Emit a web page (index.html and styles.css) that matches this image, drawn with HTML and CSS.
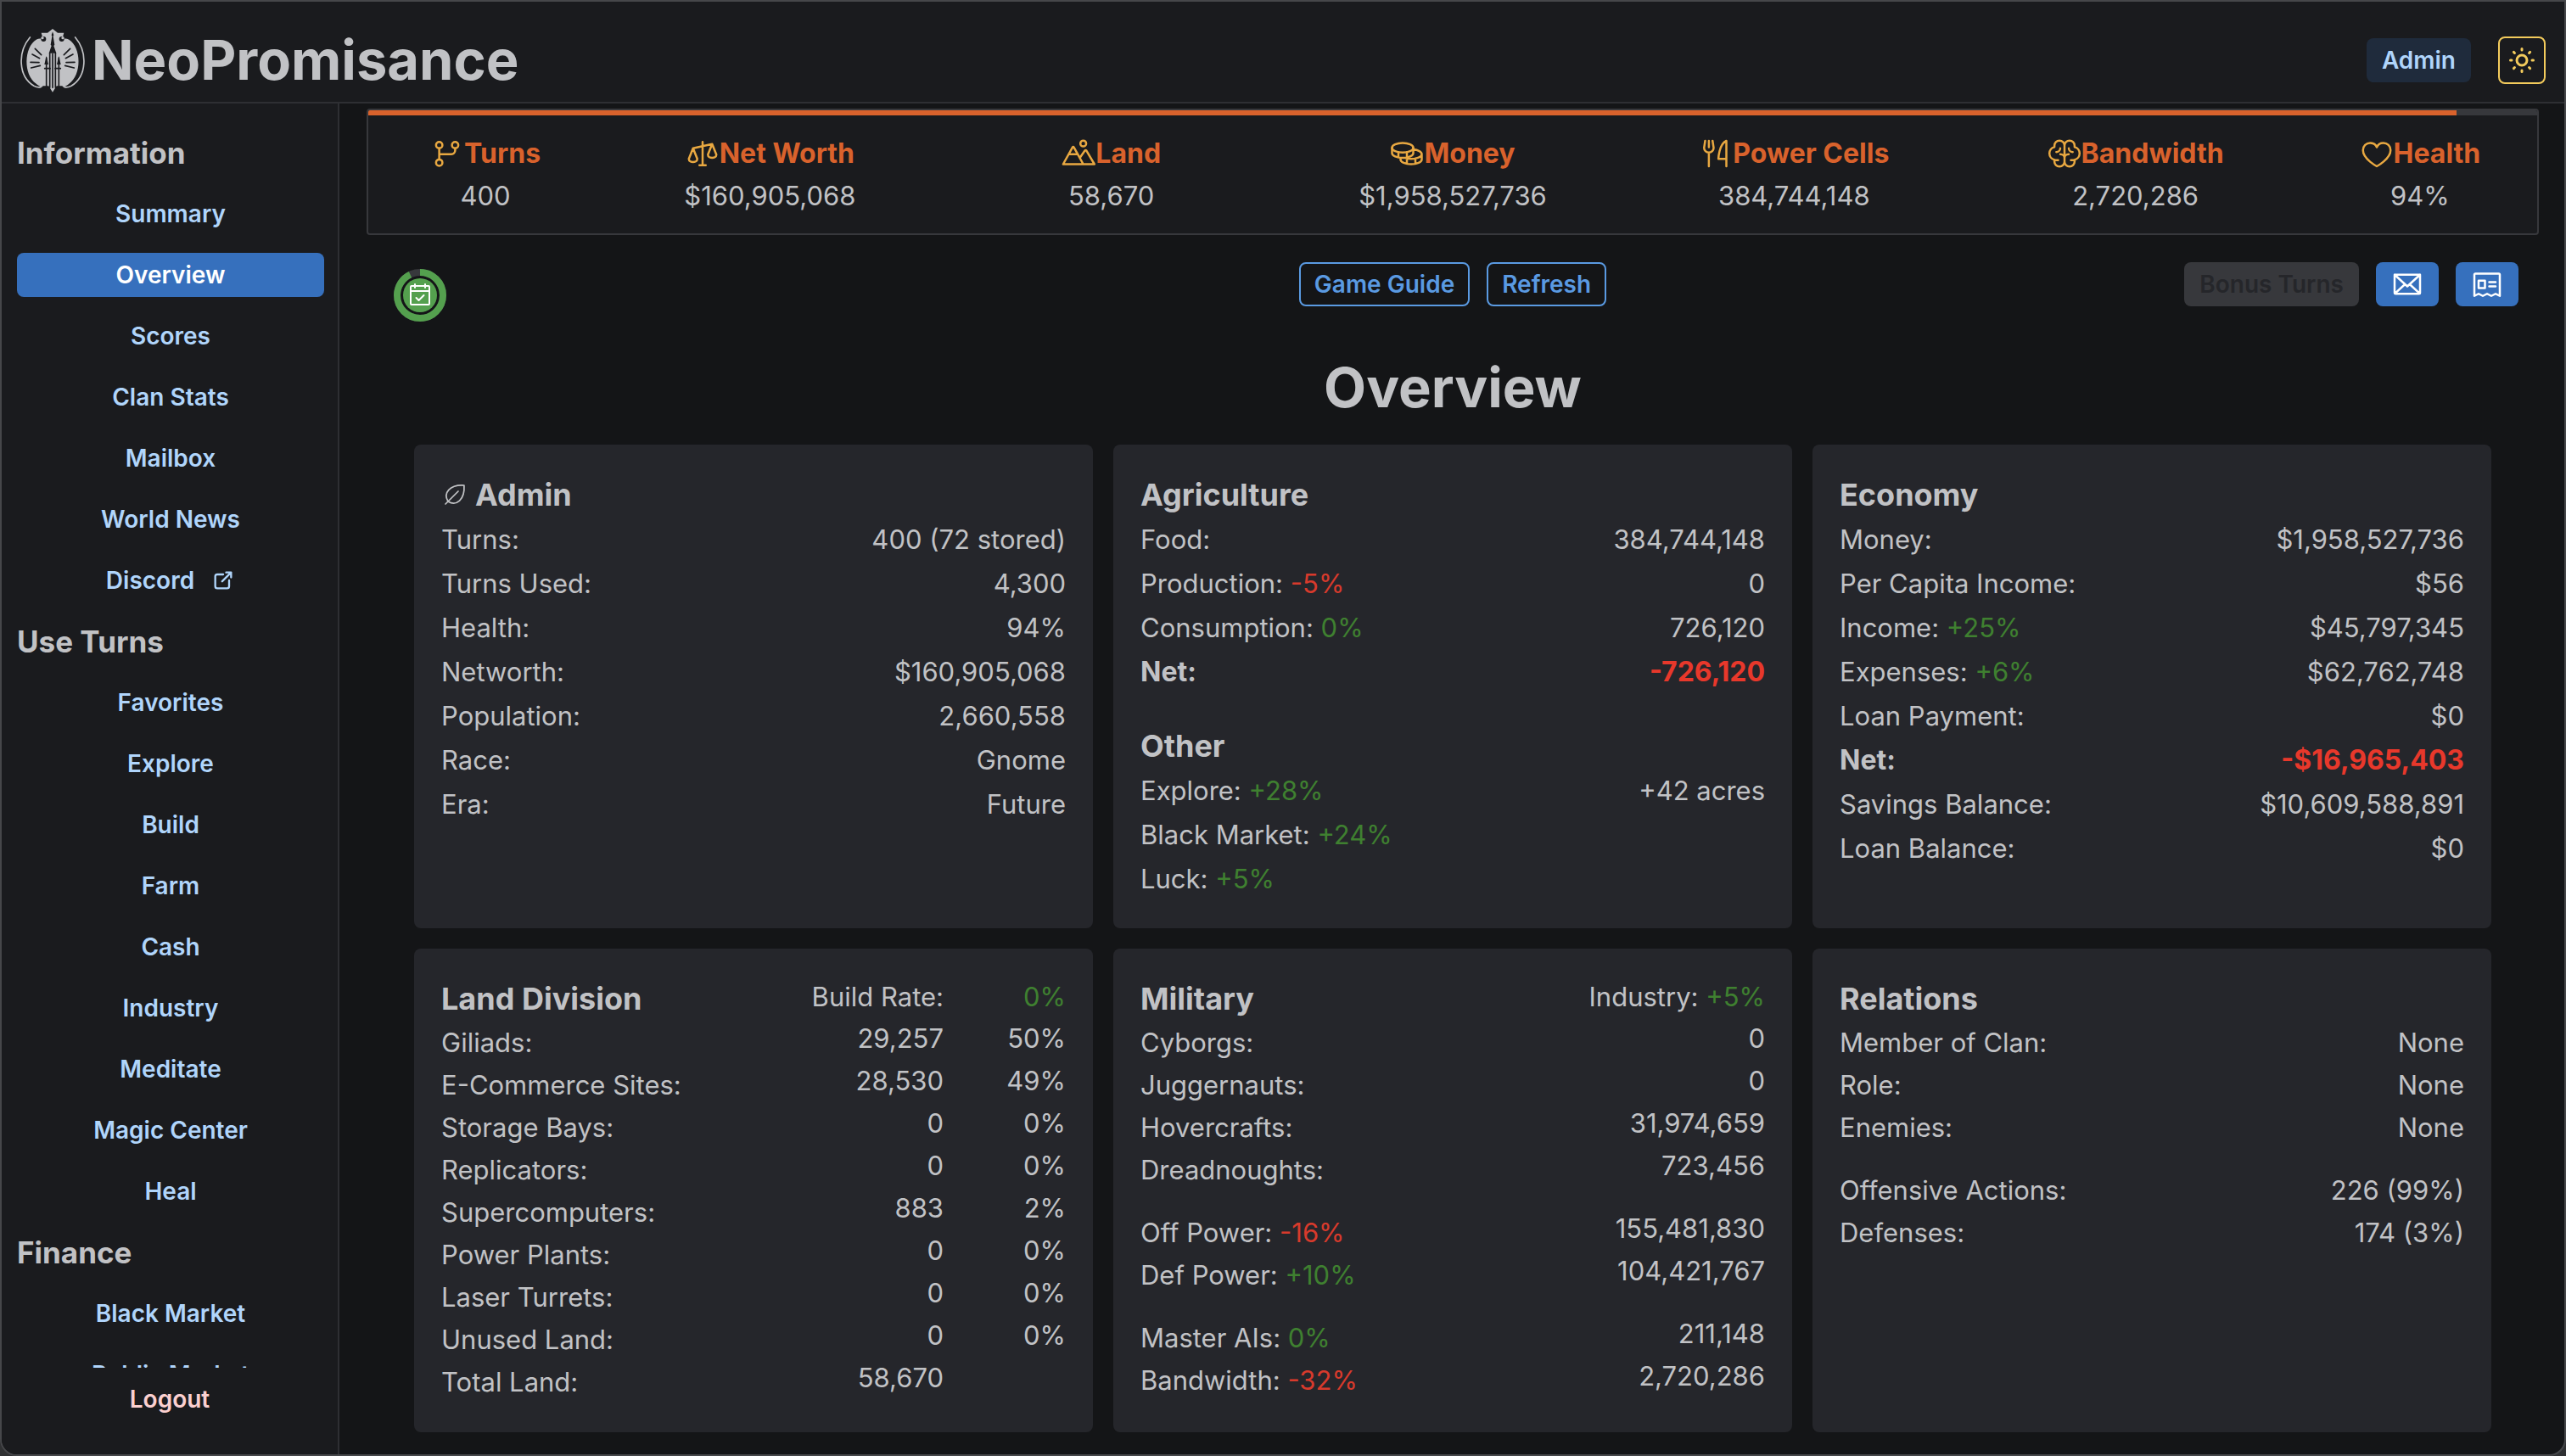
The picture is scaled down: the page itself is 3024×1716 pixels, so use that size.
FILE: index.html
```html
<!DOCTYPE html>
<html lang="en">
<head>
<meta charset="utf-8">
<meta name="viewport" content="width=device-width, initial-scale=1">
<title>NeoPromisance - Overview</title>
<link rel="stylesheet" href="styles.css">
</head>
<body>
<div class="app">
  <header class="header">
    <a class="brand" href="#">
      <svg class="brand-logo" viewBox="42 36 228 226" aria-hidden="true">
        <path class="fill" d="M98 76C54 104 52 200 98 232C104 237 110 241 118 244L122 240H142L156 262L170 240H190L194 244C202 241 208 237 214 232C260 200 258 104 214 76C206 72 198 72 190 74L196 52L174 52L156 38L138 52L116 52L122 74C114 72 106 72 98 76Z"/>
        <path class="line" d="M76 68C32 120 34 206 90 240C98 244 106 246 114 244M236 68C280 120 278 206 222 240C214 244 206 246 198 244"/>
        <path class="cut" d="M156 48L152 60L154 64L149 94L152 98L147 112L143 124H169L165 112L160 98L163 94L158 64L160 60Z"/>
        <path class="cut-line" d="M146 122V246M166 122V246M156 126V246"/>
        <path class="cut-line" d="M134 140V244M178 140V244M128 178H147M165 178H184"/>
        <path class="cut" d="M134 134L127 164H141ZM178 134L171 164H185Z"/>
        <path class="cut-line" d="M94 108L116 130M84 128L110 142M78 156L108 157M80 176L112 168M218 108L196 130M228 128L202 142M234 156L204 157M232 176L200 168"/>
        <circle class="cut" cx="124" cy="74" r="9"/><circle class="cut" cx="188" cy="74" r="9"/>
        <circle class="fill" cx="120" cy="70" r="5"/><circle class="fill" cx="192" cy="70" r="5"/>
      </svg>
      <span>NeoPromisance</span>
    </a>
    <div class="header-actions">
      <button class="btn btn-light" type="button">Admin</button>
      <button class="theme-toggle" type="button" aria-label="Toggle color scheme">
        <svg class="icon-sun" viewBox="0 0 24 24" aria-hidden="true"><circle cx="12" cy="12" r="4"/><path d="M3 12h1m8-9v1m8 8h1m-9 8v1m-6.400-15.400l.7.7m12.100-.7l-.7.7m0 11.400l.7.7m-12.100-.7l-.7.7"/></svg>
      </button>
    </div>
  </header>

  <div class="body">
    <aside class="sidebar">
      <nav class="nav">
        <h2 class="nav-title">Information</h2>
        <a class="nav-link" href="#">Summary</a>
        <a class="nav-link active" href="#" aria-current="page">Overview</a>
        <a class="nav-link" href="#">Scores</a>
        <a class="nav-link" href="#">Clan Stats</a>
        <a class="nav-link" href="#">Mailbox</a>
        <a class="nav-link" href="#">World News</a>
        <a class="nav-link" href="#">Discord
          <svg class="icon-link" viewBox="0 0 24 24" aria-hidden="true"><path d="M12 6H6a2 2 0 0 0-2 2v10a2 2 0 0 0 2 2h10a2 2 0 0 0 2-2v-6M11 13l9-9M15 4h5v5"/></svg>
        </a>
        <h2 class="nav-title">Use Turns</h2>
        <a class="nav-link" href="#">Favorites</a>
        <a class="nav-link" href="#">Explore</a>
        <a class="nav-link" href="#">Build</a>
        <a class="nav-link" href="#">Farm</a>
        <a class="nav-link" href="#">Cash</a>
        <a class="nav-link" href="#">Industry</a>
        <a class="nav-link" href="#">Meditate</a>
        <a class="nav-link" href="#">Magic Center</a>
        <a class="nav-link" href="#">Heal</a>
        <h2 class="nav-title">Finance</h2>
        <a class="nav-link" href="#">Black Market</a>
        <a class="nav-link" href="#">Public Market</a>
      </nav>
      <div class="sidebar-footer">
        <button class="nav-link logout" type="button">Logout</button>
      </div>
    </aside>

    <main class="main">
      <section class="stats" aria-label="Empire status">
        <div class="progress"><div class="progress-bar" style="width: 96.3%"></div></div>
        <div class="stats-grid">
          <div class="stat">
            <div class="stat-label"><svg class="icon" viewBox="0 0 256 256" aria-hidden="true"><circle cx="68" cy="64" r="24"/><circle cx="188" cy="64" r="24"/><circle cx="68" cy="196" r="24"/><path d="M68 88V172M188 88v16a28 28 0 0 1-28 28H68"/></svg>Turns</div>
            <div class="stat-value">400</div>
          </div>
          <div class="stat">
            <div class="stat-label"><svg class="icon" viewBox="0 0 256 256" aria-hidden="true"><path d="M128 40V216M104 216H152M56 88L200 56M24 168c0 17.670 20 24 32 24s32-6.330 32-24L56 88ZM168 136c0 17.670 20 24 32 24s32-6.330 32-24L200 56Z"/></svg>Net Worth</div>
            <div class="stat-value">$160,905,068</div>
          </div>
          <div class="stat">
            <div class="stat-label"><svg class="icon" viewBox="0 0 256 256" aria-hidden="true"><circle cx="164" cy="52" r="22"/><path d="M12 208L82 82q6-10 12 0L164 208ZM54 132H122M138 160L176 106q6-8 12 0L248 208H164"/></svg>Land</div>
            <div class="stat-value">58,670</div>
          </div>
          <div class="stat">
            <div class="stat-label"><svg class="icon" viewBox="0 0 256 256" aria-hidden="true"><ellipse cx="96" cy="84" rx="80" ry="36"/><path d="M16 84v40c0 19.880 35.820 36 80 36s80-16.120 80-36V84M64 117V157M176 96.720c36.520 3.340 64 17.860 64 35.280 0 19.880-35.820 36-80 36-19.600 0-37.560-3.170-51.470-8.440M80 159.280V172c0 19.880 35.820 36 80 36s80-16.120 80-36V132M128 117V205M192 165V205"/></svg>Money</div>
            <div class="stat-value">$1,958,527,736</div>
          </div>
          <div class="stat">
            <div class="stat-label"><svg class="icon" viewBox="0 0 256 256" aria-hidden="true"><path d="M76 32V80M76 124V224M104 32l8 52a36 36 0 0 1-72 0l8-52M208 168H148S152 56 208 32V224"/></svg>Power Cells</div>
            <div class="stat-value">384,744,148</div>
          </div>
          <div class="stat">
            <div class="stat-label"><svg class="icon" viewBox="0 0 256 256" aria-hidden="true"><path d="M128 68V188M128 68a38 38 0 0 0-76 0v10a50 50 0 0 0 0 97v13a38 38 0 0 0 76 0M128 68a38 38 0 0 1 76 0v10a50 50 0 0 1 0 97v13a38 38 0 0 1-76 0M52 175a50 50 0 0 0 20 3h8M204 175a50 50 0 0 1-20 3h-8M96 88a30 30 0 0 1-30 28M160 88a30 30 0 0 0 30 28M128 160c0-16-14-28-32-28M128 160c0-16 14-28 32-28"/></svg>Bandwidth</div>
            <div class="stat-value">2,720,286</div>
          </div>
          <div class="stat">
            <div class="stat-label"><svg class="icon" viewBox="0 0 256 256" aria-hidden="true"><path d="M128 224S24 168 24 102A54 54 0 0 1 78 48c22.590 0 41.940 12.310 50 32 8.060-19.690 27.410-32 50-32a54 54 0 0 1 54 54C232 168 128 224 128 224Z"/></svg>Health</div>
            <div class="stat-value">94%</div>
          </div>
        </div>
      </section>

      <div class="toolbar">
        <svg class="ring" viewBox="0 0 78 78" role="img" aria-label="Daily check-in">
          <circle class="ring-track" cx="39" cy="39" r="27"/>
          <circle class="ring-value" cx="39" cy="39" r="27" pathLength="100" stroke-dasharray="93 100" transform="rotate(-90 39 39)"/>
          <circle class="ring-core" cx="39" cy="39" r="20"/>
          <g class="ring-icon" transform="translate(23 23) scale(.125)"><rect x="40" y="40" width="176" height="176" rx="8"/><path d="M176 24V56M80 24V56M40 88H216M92 152l24 24 48-48"/></g>
        </svg>
        <div class="toolbar-center">
          <button class="btn btn-outline" type="button">Game Guide</button>
          <button class="btn btn-outline" type="button">Refresh</button>
        </div>
        <div class="toolbar-end">
          <button class="btn btn-disabled" type="button" disabled>Bonus Turns</button>
          <button class="btn btn-filled" type="button" aria-label="Mailbox"><svg class="icon" viewBox="0 0 256 256" aria-hidden="true"><path d="M32 56H224V192a8 8 0 0 1-8 8H40a8 8 0 0 1-8-8ZM224 56L128 144L32 56M110.550 128L34.470 197.740M221.530 197.740L145.450 128"/></svg></button>
          <button class="btn btn-filled" type="button" aria-label="News"><svg class="icon" viewBox="0 0 256 256" aria-hidden="true"><path d="M32 216V56a8 8 0 0 1 8-8H216a8 8 0 0 1 8 8V216l-32-16-32 16-32-16-32 16-32-16ZM144 112H192M144 144H192"/><rect x="64" y="100" width="48" height="56"/></svg></button>
        </div>
      </div>

      <h1 class="page-title">Overview</h1>

      <div class="cards">
        <section class="card">
          <h2 class="card-title"><svg class="icon-leaf" viewBox="0 0 256 256" aria-hidden="true"><path d="M63.810 192.190c-47.890-79.810 16-159.620 151.640-151.640C223.430 176.230 143.620 240.080 63.810 192.190ZM160 96L40 216"/></svg>Admin</h2>
          <table class="rows">
            <tr><th scope="row">Turns:</th><td>400 (72 stored)</td></tr>
            <tr><th scope="row">Turns Used:</th><td>4,300</td></tr>
            <tr><th scope="row">Health:</th><td>94%</td></tr>
            <tr><th scope="row">Networth:</th><td>$160,905,068</td></tr>
            <tr><th scope="row">Population:</th><td>2,660,558</td></tr>
            <tr><th scope="row">Race:</th><td>Gnome</td></tr>
            <tr><th scope="row">Era:</th><td>Future</td></tr>
          </table>
        </section>

        <section class="card">
          <h2 class="card-title">Agriculture</h2>
          <table class="rows">
            <tr><th scope="row">Food:</th><td>384,744,148</td></tr>
            <tr><th scope="row">Production: <span class="neg">-5%</span></th><td>0</td></tr>
            <tr><th scope="row">Consumption: <span class="pos">0%</span></th><td>726,120</td></tr>
            <tr class="net"><th scope="row">Net:</th><td class="loss">-726,120</td></tr>
          </table>
          <h2 class="card-title card-title-next">Other</h2>
          <table class="rows">
            <tr><th scope="row">Explore: <span class="pos">+28%</span></th><td>+42 acres</td></tr>
            <tr><th scope="row">Black Market: <span class="pos">+24%</span></th><td></td></tr>
            <tr><th scope="row">Luck: <span class="pos">+5%</span></th><td></td></tr>
          </table>
        </section>

        <section class="card">
          <h2 class="card-title">Economy</h2>
          <table class="rows">
            <tr><th scope="row">Money:</th><td>$1,958,527,736</td></tr>
            <tr><th scope="row">Per Capita Income:</th><td>$56</td></tr>
            <tr><th scope="row">Income: <span class="pos">+25%</span></th><td>$45,797,345</td></tr>
            <tr><th scope="row">Expenses: <span class="pos">+6%</span></th><td>$62,762,748</td></tr>
            <tr><th scope="row">Loan Payment:</th><td>$0</td></tr>
            <tr class="net"><th scope="row">Net:</th><td class="loss">-$16,965,403</td></tr>
            <tr><th scope="row">Savings Balance:</th><td>$10,609,588,891</td></tr>
            <tr><th scope="row">Loan Balance:</th><td>$0</td></tr>
          </table>
        </section>

        <section class="card">
          <table class="rows rows-dense rows-raised land">
            <thead><tr><th scope="col"><h2 class="card-title">Land Division</h2></th><td>Build Rate:</td><td class="pos">0%</td></tr></thead>
            <tbody>
              <tr><th scope="row">Giliads:</th><td>29,257</td><td>50%</td></tr>
              <tr><th scope="row">E-Commerce Sites:</th><td>28,530</td><td>49%</td></tr>
              <tr><th scope="row">Storage Bays:</th><td>0</td><td>0%</td></tr>
              <tr><th scope="row">Replicators:</th><td>0</td><td>0%</td></tr>
              <tr><th scope="row">Supercomputers:</th><td>883</td><td>2%</td></tr>
              <tr><th scope="row">Power Plants:</th><td>0</td><td>0%</td></tr>
              <tr><th scope="row">Laser Turrets:</th><td>0</td><td>0%</td></tr>
              <tr><th scope="row">Unused Land:</th><td>0</td><td>0%</td></tr>
              <tr><th scope="row">Total Land:</th><td>58,670</td><td></td></tr>
            </tbody>
          </table>
        </section>

        <section class="card">
          <table class="rows rows-dense rows-raised">
            <thead><tr><th scope="col"><h2 class="card-title">Military</h2></th><td>Industry: <span class="pos">+5%</span></td></tr></thead>
            <tbody>
              <tr><th scope="row">Cyborgs:</th><td>0</td></tr>
              <tr><th scope="row">Juggernauts:</th><td>0</td></tr>
              <tr><th scope="row">Hovercrafts:</th><td>31,974,659</td></tr>
              <tr><th scope="row">Dreadnoughts:</th><td>723,456</td></tr>
              <tr class="spaced"><th scope="row">Off Power: <span class="neg">-16%</span></th><td>155,481,830</td></tr>
              <tr><th scope="row">Def Power: <span class="pos">+10%</span></th><td>104,421,767</td></tr>
              <tr class="spaced"><th scope="row">Master AIs: <span class="pos">0%</span></th><td>211,148</td></tr>
              <tr><th scope="row">Bandwidth: <span class="neg">-32%</span></th><td>2,720,286</td></tr>
            </tbody>
          </table>
        </section>

        <section class="card">
          <h2 class="card-title">Relations</h2>
          <table class="rows rows-dense">
            <tr><th scope="row">Member of Clan:</th><td>None</td></tr>
            <tr><th scope="row">Role:</th><td>None</td></tr>
            <tr><th scope="row">Enemies:</th><td>None</td></tr>
            <tr class="spaced"><th scope="row">Offensive Actions:</th><td>226 (99%)</td></tr>
            <tr><th scope="row">Defenses:</th><td>174 (3%)</td></tr>
          </table>
        </section>
      </div>
    </main>
  </div>
</div>
</body>
</html>
```
FILE: styles.css
```css
:root {
  --bg: #141517;
  --surface: #1a1b1e;
  --card: #25262b;
  --line: #2e2f33;
  --text: #c1c2c5;
  --blue: #3670bd;
  --sky: #b0d5fb;
  --orange: #d9622c;
  --amber: #e8a841;
  --green: #3f8030;
  --red: #d83a2c;
}

* { box-sizing: border-box; }

body {
  margin: 0;
  background: #303133;
  color: var(--text);
  font: 400 31px/50px Inter, "Liberation Sans", sans-serif;
}

h1, h2 { margin: 0; }
a { color: inherit; text-decoration: none; }
button { font: inherit; cursor: pointer; }
svg { display: block; flex: none; fill: none; stroke: currentColor; stroke-linecap: round; stroke-linejoin: round; }

.app {
  display: flex;
  flex-direction: column;
  height: 100vh;
  overflow: hidden;
  border: 2px solid #46474a;
  border-radius: 0 0 20px 20px;
  background: var(--bg);
}

/* Header */
.header {
  display: flex;
  align-items: center;
  justify-content: space-between;
  height: 120px;
  flex: none;
  padding: 20px 22px 0;
  background: var(--surface);
  border-bottom: 2px solid var(--line);
}
.brand { display: flex; align-items: center; gap: 8px; font-size: 65px; line-height: 80px; font-weight: 700; }
.brand-logo { width: 76px; height: 76px; }
.brand-logo .fill { fill: var(--text); stroke: none; }
.brand-logo .cut { fill: var(--surface); stroke: none; }
.brand-logo .line { stroke: var(--text); stroke-width: 5; }
.brand-logo .cut-line { stroke: var(--surface); stroke-width: 5; }
.header-actions { display: flex; align-items: center; gap: 32px; }

.btn {
  display: flex;
  align-items: center;
  justify-content: center;
  height: 52px;
  padding: 0 16px;
  border: 2px solid transparent;
  border-radius: 8px;
  font-size: 28px;
  line-height: 32px;
  font-weight: 600;
}
.btn-light { background: #1f2b3c; color: var(--sky); }
.btn-outline { background: transparent; border-color: #5a9ae2; color: #5a9ae2; }
.btn-disabled { background: #37383c; color: #25262a; cursor: default; }
.btn-filled { width: 74px; background: var(--blue); color: #fff; }
.theme-toggle {
  display: flex;
  align-items: center;
  justify-content: center;
  width: 56px;
  height: 56px;
  padding: 0;
  background: transparent;
  border: 2px solid #f3cb5c;
  border-radius: 8px;
  color: #f3cb5c;
}
.icon { width: 40px; height: 40px; stroke-width: 16; }
.icon-sun { width: 36px; height: 36px; stroke-width: 2; }
.icon-link { width: 28px; height: 28px; stroke-width: 2; }
.icon-leaf { width: 32px; height: 32px; stroke-width: 14; }

/* Sidebar */
.body { display: flex; flex: 1; min-height: 0; }
.sidebar {
  display: flex;
  flex-direction: column;
  width: 398px;
  flex: none;
  background: var(--surface);
  border-right: 2px solid var(--line);
}
.nav {
  display: flex;
  flex-direction: column;
  gap: 20px;
  flex: 1;
  min-height: 0;
  padding: 32px 16px 0 18px;
  overflow-y: auto;
  scrollbar-width: none;
}
.nav-title { flex: none; font-size: 35px; line-height: 52px; font-weight: 700; }
.nav-link {
  display: flex;
  align-items: center;
  justify-content: center;
  gap: 20px;
  flex: none;
  height: 52px;
  border-radius: 8px;
  color: var(--sky);
  font-size: 28px;
  line-height: 52px;
  font-weight: 600;
}
.nav-link.active { background: var(--blue); color: #fff; }
.sidebar-footer { flex: none; padding: 11px 18px 39px; }
.logout { width: 100%; padding: 0; border: 0; background: transparent; color: #fbd0d0; }

/* Main column */
.main { flex: 1; min-width: 0; padding: 6px 30px 24px 32px; overflow-y: auto; }
.stats {
  border: 2px solid #37383c;
  border-radius: 4px;
  background: var(--surface);
  overflow: hidden;
}
.progress { height: 6px; background: #37383c; }
.progress-bar { height: 100%; background: var(--orange); }
.stats-grid { display: grid; grid-template-columns: 2fr repeat(5, 3fr) 2fr; padding: 20px 4px 19px; text-align: center; }
.stat-label { display: flex; align-items: center; justify-content: center; color: var(--orange); font-size: 32px; font-weight: 700; }
.stat-label .icon { color: var(--amber); }

.toolbar {
  display: grid;
  grid-template-columns: 1fr auto 1fr;
  align-items: start;
  padding: 32px 24px 0;
}
.ring { width: 78px; height: 78px; }
.ring-track { stroke: #37383c; stroke-width: 8; }
.ring-value { stroke: #54a04e; stroke-width: 8; stroke-linecap: butt; }
.ring-core { fill: #54a04e; stroke: none; }
.ring-icon { stroke: #fff; stroke-width: 16; }
.toolbar-center { display: flex; gap: 20px; }
.toolbar-end { display: flex; justify-content: flex-end; gap: 20px; }

.page-title { margin: 26px 0 23px; font-size: 65px; line-height: 88px; font-weight: 700; text-align: center; }

/* Cards */
.cards {
  display: grid;
  grid-template-columns: repeat(3, 1fr);
  grid-auto-rows: 1fr;
  gap: 24px;
  padding: 0 56px;
}
.card { padding: 32px; border-radius: 8px; background: var(--card); }
.card-title { display: flex; align-items: center; gap: 8px; font-size: 36px; line-height: 54px; font-weight: 700; }
.card-title-next { margin-top: 34px; }

.rows { width: 100%; border-collapse: collapse; }
.rows th, .rows td { padding: 0; line-height: 52px; vertical-align: top; }
.rows th { font-weight: 400; text-align: left; }
.rows td { text-align: right; }
.rows .net th, .rows .net td { font-size: 32px; font-weight: 700; }
.rows-dense th, .rows-dense td { line-height: 50px; }
.rows-raised tbody td { line-height: 40px; }
.rows .spaced th, .rows .spaced td { padding-top: 24px; }
.land td:last-child { width: 144px; }
.pos { color: var(--green); }
.neg { color: var(--red); }
.rows .loss { color: #e8382b; }
```
